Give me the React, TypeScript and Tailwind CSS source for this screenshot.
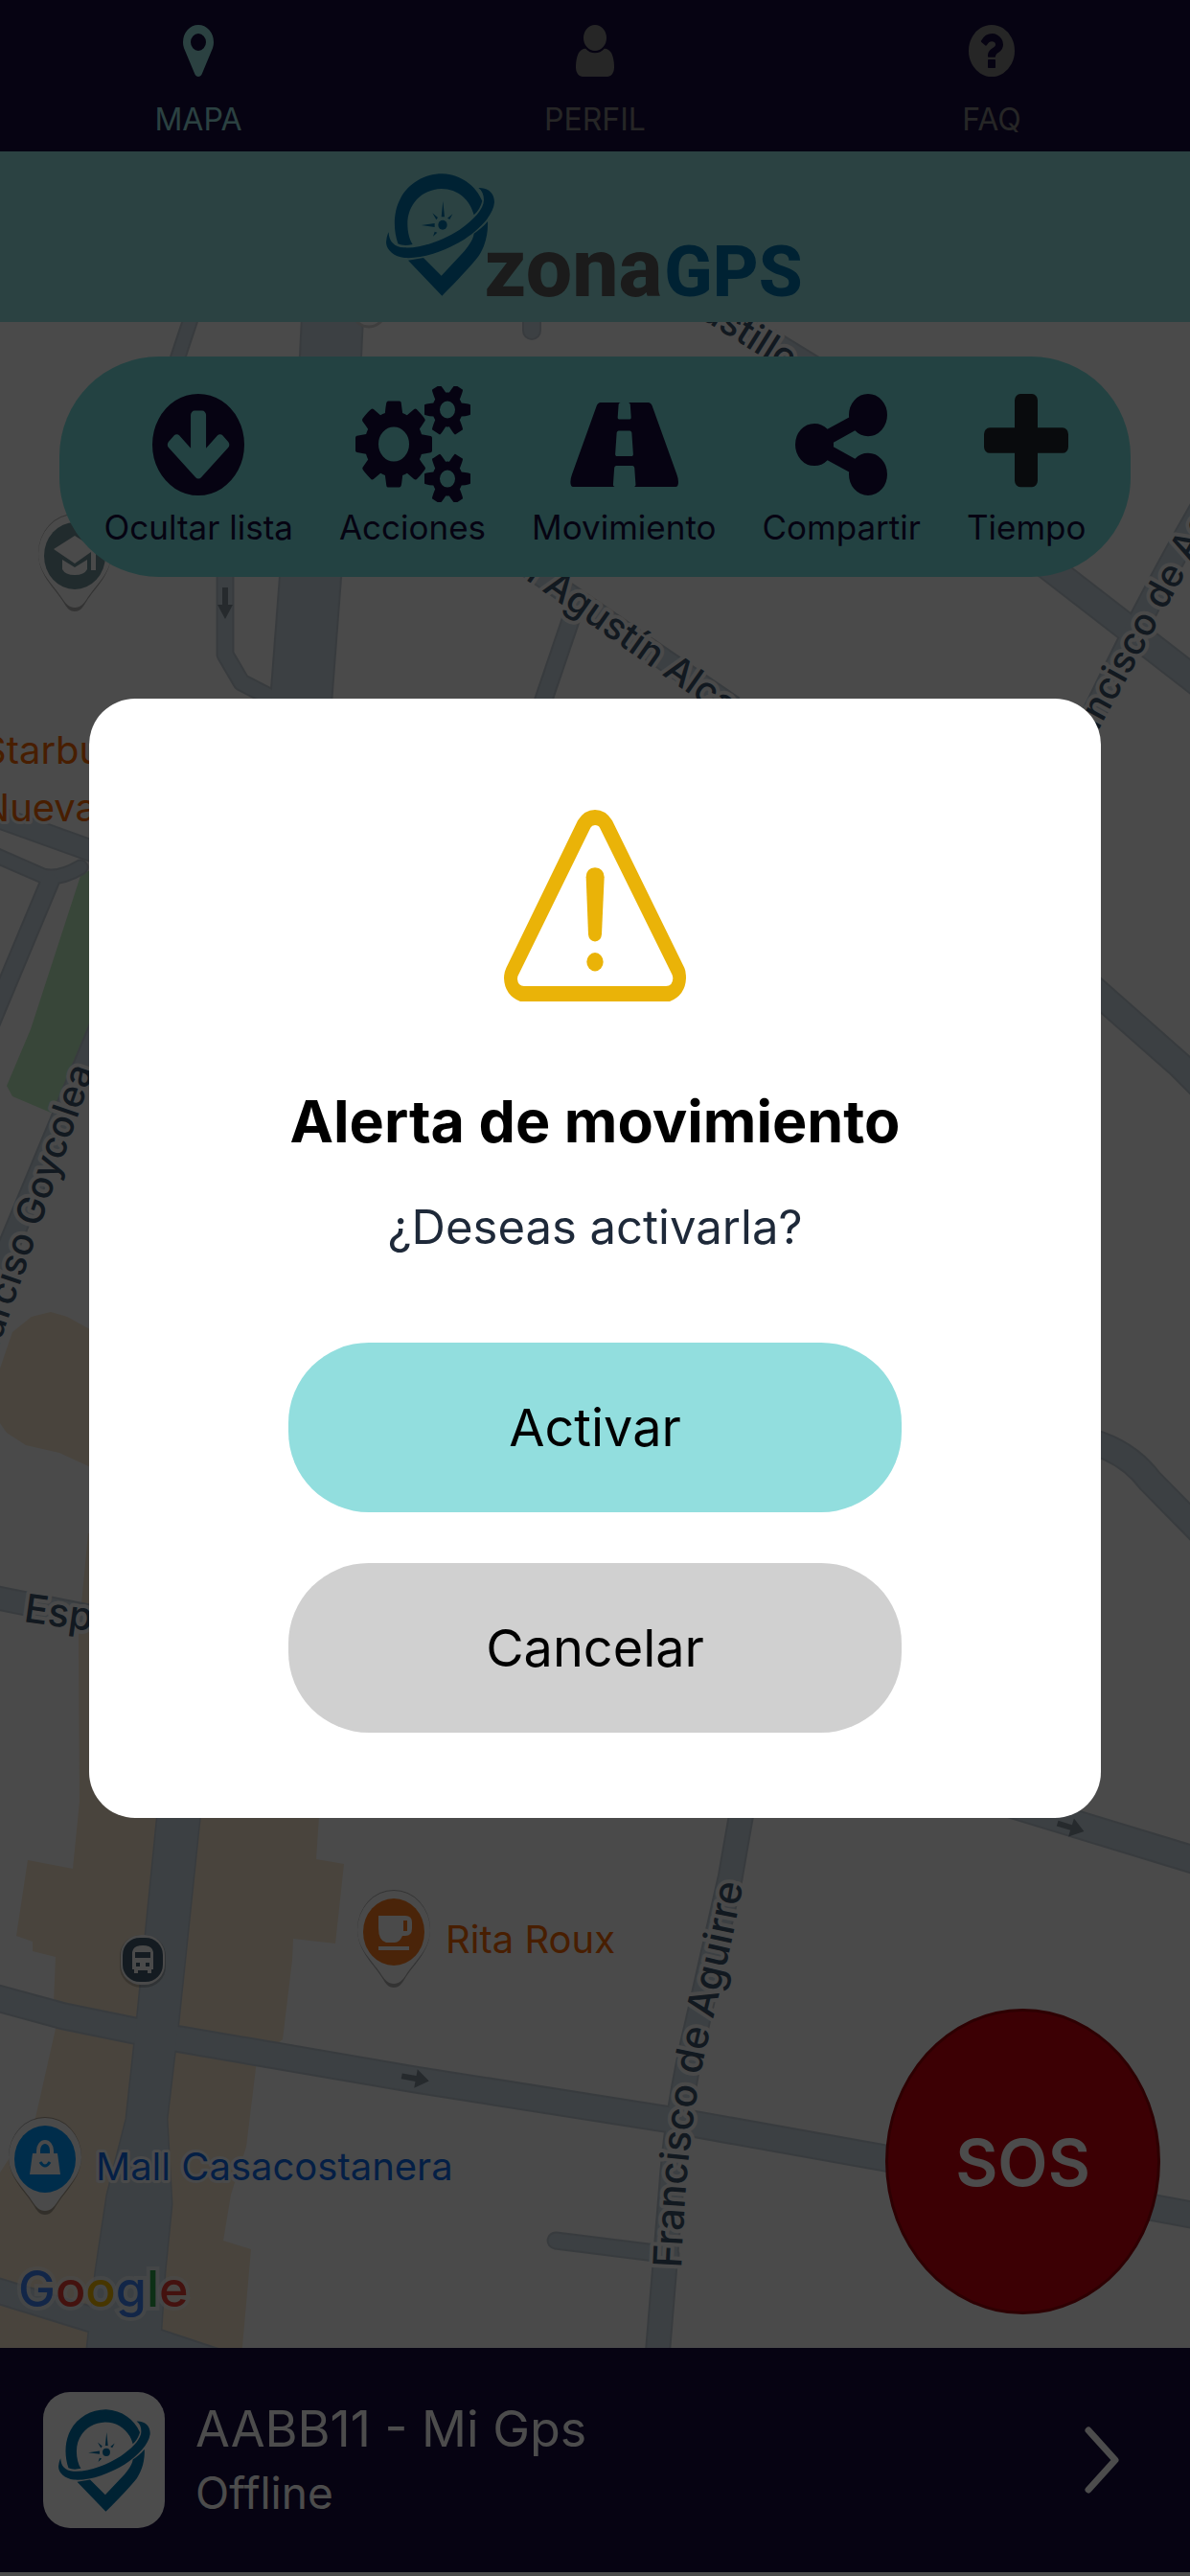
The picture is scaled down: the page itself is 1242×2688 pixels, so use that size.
import { useState } from 'react'

const ICONS = {
    pin: 'M768 640q0-106-75-181t-181-75-181 75-75 181 75 181 181 75 181-75 75-181zm256 0q0 109-33 179l-364 774q-16 33-47.5 52t-67.5 19-67.5-19-46.5-52l-365-774q-33-70-33-179 0-212 150-362t362-150 362 150 150 362z',
    user: 'M1536 1399q0 109-62.5 187t-150.5 78h-854q-88 0-150.5-78t-62.5-187q0-85 8.5-160.5t31.5-152 58.5-131 94-89 134.5-34.5q131 128 313 128t313-128q76 0 134.5 34.5t94 89 58.5 131 31.5 152 8.5 160.5zm-256-887q0 159-112.5 271.5t-271.5 112.5-271.5-112.5-112.5-271.5 112.5-271.5 271.5-112.5 271.5 112.5 112.5 271.5z',
    help: 'M1024 1376v-192q0-14-9-23t-23-9h-192q-14 0-23 9t-9 23v192q0 14 9 23t23 9h192q14 0 23-9t9-23zm256-672q0-88-55.5-163t-138.5-116-170-41q-243 0-371 213-15 24 8 42l132 100q7 6 19 6 16 0 25-12 53-68 86-92 34-24 86-24 48 0 85.5 26t37.5 59q0 38-20 61t-68 45q-63 28-115.5 86.5t-52.5 125.5v36q0 14 9 23t23 9h192q14 0 23-9t9-23q0-19 21.5-49.5t54.5-49.5q32-18 49-28.5t46-35 44.5-48 28-60.5 12.5-81zm384 192q0 209-103 385.5t-279.5 279.5-385.5 103-385.5-103-279.5-279.5-103-385.5 103-385.5 279.5-279.5 385.5-103 385.5 103 279.5 279.5 103 385.5z',
    arrowDown: 'M1413 896q0-27-18-45l-91-91q-18-18-45-18t-45 18l-189 189v-502q0-26-19-45t-45-19h-128q-26 0-45 19t-19 45v502l-189-189q-19-19-45-19t-45 19l-91 91q-18 18-18 45t18 45l362 362 91 91q18 18 45 18t45-18l91-91 362-362q18-18 18-45zm251 0q0 209-103 385.5t-279.5 279.5-385.5 103-385.5-103-279.5-279.5-103-385.5 103-385.5 279.5-279.5 385.5-103 385.5 103 279.5 279.5 103 385.5z',
    cogs: 'M896 896q0-106-75-181t-181-75-181 75-75 181 75 181 181 75 181-75 75-181zm768 512q0-52-38-90t-90-38-90 38-38 90q0 53 37.5 90.5t90.5 37.5 90.5-37.5 37.5-90.5zm0-1024q0-52-38-90t-90-38-90 38-38 90q0 53 37.5 90.5t90.5 37.5 90.5-37.5 37.5-90.5zm-384 421v185q0 10-7 19.5t-16 10.5l-155 24q-11 35-32 76 34 48 90 115 7 11 7 20 0 12-7 19-23 30-82.5 89.5t-78.5 59.5q-11 0-21-7l-115-90q-37 19-77 31-11 108-23 155-7 24-30 24h-186q-11 0-20-7.5t-10-17.5l-23-153q-34-10-75-31l-118 89q-7 7-20 7-11 0-21-8-144-133-144-160 0-9 7-19 10-14 41-53t47-61q-23-44-35-82l-152-24q-10-1-17-9.5t-7-19.5v-185q0-10 7-19.5t16-10.5l155-24q11-35 32-76-34-48-90-115-7-11-7-20 0-12 7-20 22-30 82-89t79-59q11 0 21 7l115 90q34-18 77-32 11-108 23-154 7-24 30-24h186q11 0 20 7.5t10 17.5l23 153q34 10 75 31l118-89q8-7 20-7 11 0 21 8 144 133 144 160 0 8-7 19-12 16-42 54t-45 60q23 48 34 82l152 23q10 2 17 10.5t7 19.5zm640 533v140q0 16-149 31-12 27-30 52 51 113 51 138 0 4-4 7-122 71-124 71-8 0-46-47t-52-68q-20 2-30 2t-30-2q-14 21-52 68t-46 47q-2 0-124-71-4-3-4-7 0-25 51-138-18-25-30-52-149-15-149-31v-140q0-16 149-31 13-29 30-52-51-113-51-138 0-4 4-7 4-2 35-20t59-34 30-16q8 0 46 46.5t52 67.5q20-2 30-2t30 2q51-71 92-112l6-2q4 0 124 70 4 3 4 7 0 25-51 138 17 23 30 52 149 15 149 31zm0-1024v140q0 16-149 31-12 27-30 52 51 113 51 138 0 4-4 7-122 71-124 71-8 0-46-47t-52-68q-20 2-30 2t-30-2q-14 21-52 68t-46 47q-2 0-124-71-4-3-4-7 0-25 51-138-18-25-30-52-149-15-149-31v-140q0-16 149-31 13-29 30-52-51-113-51-138 0-4 4-7 4-2 35-20t59-34 30-16q8 0 46 46.5t52 67.5q20-2 30-2t30 2q51-71 92-112l6-2q4 0 124 70 4 3 4 7 0 25-51 138 17 23 30 52 149 15 149 31z',
    road: 'M1111 1048v-4l-24-320q-1-13-11-22.5t-23-9.5h-186q-13 0-23 9.5t-11 22.5l-24 320v4q-1 12 8 20t21 8h244q12 0 21-8t8-20zm762 421q0 73-46 73h-704q13 0 22-9.5t8-22.5l-20-256q-1-13-11-22.5t-23-9.5h-272q-13 0-23 9.5t-11 22.5l-20 256q-1 13 8 22.5t22 9.5h-704q-46 0-46-73 0-54 26-116l417-1044q8-19 26-33t38-14h339q-13 0-23 9.5t-11 22.5l-15 192q-1 14 8 23t22 9h166q13 0 22-9t8-23l-15-192q-1-13-11-22.5t-23-9.5h339q20 0 38 14t26 33l417 1044q26 62 26 116z',
    share: 'M1344 1024q133 0 226.5 93.5t93.5 226.5-93.5 226.5-226.5 93.5-226.5-93.5-93.5-226.5q0-12 2-34l-360-180q-92 86-218 86-133 0-226.5-93.5t-93.5-226.5 93.5-226.5 226.5-93.5q126 0 218 86l360-180q-2-22-2-34 0-133 93.5-226.5t226.5-93.5 226.5 93.5 93.5 226.5-93.5 226.5-226.5 93.5q-126 0-218-86l-360 180q2 22 2 34t-2 34l360 180q92-86 218-86z',
    plus: 'M1600 736v192q0 40-28 68t-68 28h-416v416q0 40-28 68t-68 28h-192q-40 0-68-28t-28-68v-416h-416q-40 0-68-28t-28-68v-192q0-40 28-68t68-28h416v-416q0-40 28-68t68-28h192q40 0 68 28t28 68v416h416q40 0 68 28t28 68z',
}

function Icon({ d, viewBox, className }: { d: string; viewBox: string; className: string }) {
    return (
        <svg viewBox={viewBox} preserveAspectRatio="none" className={className} fill="currentColor" aria-hidden="true">
            <path d={d} />
        </svg>
    )
}

const tabs = [
    { label: 'MAPA', d: ICONS.pin, viewBox: '0 128 1024 1536', size: 'w-8 h-[54px]', color: 'text-[#8fdada]' },
    { label: 'PERFIL', d: ICONS.user, viewBox: '256 128 1280 1536', size: 'w-10 h-[54px]', color: 'text-[#808080]' },
    { label: 'FAQ', d: ICONS.help, viewBox: '128 128 1536 1536', size: 'w-12 h-[54px]', color: 'text-[#808080]' },
]

const actions = [
    { label: 'Ocultar lista', d: ICONS.arrowDown, viewBox: '128 128 1536 1536', size: 'w-24 h-[106px]', color: '' },
    { label: 'Acciones', d: ICONS.cogs, viewBox: '0 36 1920 1720', size: 'w-[120px] h-[121px]', color: '' },
    { label: 'Movimiento', d: ICONS.road, viewBox: '47 262 1826 1280', size: 'w-[113px] h-[88px]', color: '' },
    { label: 'Compartir', d: ICONS.share, viewBox: '128 128 1536 1536', size: 'w-24 h-[106px]', color: '' },
    { label: 'Tiempo', d: ICONS.plus, viewBox: '192 128 1408 1536', size: 'w-[88px] h-[106px]', color: 'text-[#1e252d]' },
]

function BrandMark() {
    return (
        <g fill="#0074ab">
            <path d="M92 282C76 235 78 180 100 140C125 92 178 62 232 63C290 66 335 100 356 148C352 165 343 180 330 192C318 145 280 110 228 110C165 112 122 160 122 220C122 245 128 268 138 284C120 288 105 288 92 282Z" />
            <path d="M344 107C375 106 394 125 394 152C392 190 350 235 300 268C240 305 170 330 112 326C75 322 50 295 56 270C57 260 60 252 63 246C64 275 80 292 110 294C165 298 235 270 285 238C330 205 360 175 361 145C361 128 355 115 344 107Z" />
            <path d="M124 334L172 326L228 382L300 305C320 280 328 265 330 250C345 240 360 228 373 212C375 250 365 290 345 320C320 352 280 395 230 445Z" />
            <ellipse cx="232" cy="223" rx="14" ry="15" />
            <path d="M233 148L238 198H228ZM165 224L207 218V230ZM200 186L217 200L212 207ZM263 189L254 206L247 202ZM202 259L207 244L215 247Z" />
        </g>
    )
}

function Logo() {
    return (
        <svg viewBox="55 62 1310 390" className="h-[130px]" role="img" aria-label="zonaGPS">
            <BrandMark />
            <g fontFamily="Roboto, sans-serif" fontWeight="800">
                <text x="362" y="445" fontSize="258" fill="#5d5d5d">zona</text>
                <text x="926" y="445" fontSize="222" fill="#0074ab">GPS</text>
            </g>
        </svg>
    )
}

function Pin({ x, y, color, children }: { x: number; y: number; color: string; children: React.ReactNode }) {
    return (
        <g transform={`translate(${x} ${y})`}>
            <path d="M0 58C-6 58 -9 53 -12 48C-22 32 -38 20 -38 -3A38 41 0 0 1 38 -3C38 20 22 32 12 48C9 53 6 58 0 58Z" fill="#000" opacity=".3" />
            <path d="M0 54C-6 54 -9 50 -12 46C-22 30 -38 18 -38 -2A38 41 0 0 1 38 -2C38 18 22 30 12 46C9 50 6 54 0 54Z" fill="#f7f7f7" />
            <ellipse rx="32" ry="35" fill={color} />
            {children}
        </g>
    )
}

// thin edge drawn first, fill on top
const roads = [
    { d: 'M200 330L170 420', w: 15 },
    { d: 'M235 590V683L252 712L310 742', w: 17 },
    { d: 'M347 330L345 372L324 602L312 760', w: 64 },
    { d: 'M555 320V345', w: 18 },
    { d: 'M700 290L870 394', w: 20 },
    { d: 'M520 570L810 768', w: 22 },
    { d: 'M598 640L564 740', w: 18 },
    { d: 'M1090 588L1250 712', w: 28 },
    { d: 'M1120 790Q1190 640 1260 520', w: 24 },
    { d: 'M1130 1022L1232 1112L1260 1140', w: 27 },
    { d: 'M1130 1502Q1175 1512 1200 1545L1260 1606', w: 26 },
    { d: 'M-10 850L110 893', w: 22 },
    { d: 'M-10 890L45 914Q62 918 84 905', w: 15 },
    { d: 'M52 920L-20 1092', w: 19 },
    { d: 'M110 1058L-20 1370', w: 22 },
    { d: 'M-10 1666L110 1690', w: 24 },
    { d: 'M1030 1875L1260 1945', w: 28 },
    { d: 'M580 2338L700 2353', w: 17 },
    { d: 'M776 1880L762 1960L728 2110Q706 2200 700 2290L686 2460', w: 25 },
    { d: 'M-10 2083L67 2104L165 2124L433 2170L700 2212L924 2252L1260 2314', w: 27 },
    { d: 'M-10 2388L94 2420L250 2472', w: 26 },
]

function MapView() {
    return (
        <svg viewBox="0 336 1242 2114" preserveAspectRatio="xMidYMid slice" className="absolute inset-0 size-full bg-[#f7f7f7]" fontFamily="Inter, sans-serif">
            <g fill="#f3e3cb">
                <path d="M0 1428L13 1390L33 1374L53 1369L70 1374L110 1396V1538L62 1516L27 1508L7 1495L0 1485Z" />
                <path d="M92 1600L82 1705L83 1880L76 1950L29 1941L17 2020L34 2026V2036L58 2042L56 2090L58 2117L37 2210L0 2267V2460H252L262 2347L233 2338L241 2290L257 2240L268 2150L295 2128L305 2045L306 2023L350 2028L359 1945L330 1940L334 1880L340 1600Z" />
            </g>
            <path d="M85 911L110 904V1050L60 1161H53L13 1144L7 1133L32 1074Z" fill="#bbe9be" />

            <g fill="none" strokeLinecap="round" strokeLinejoin="round">
                {roads.map(r => <path key={r.d} d={r.d} stroke="#bbc7d0" strokeWidth={r.w + 2} />)}
                <path d="M166 1880L143 2110L132 2211L112 2290L100 2370L90 2460H166L172 2370L179 2300L174 2211L186 2110L210 1880Z" stroke="#bbc7d0" strokeWidth="3" />
                {roads.map(r => <path key={r.d} d={r.d} stroke="#c8d5df" strokeWidth={r.w - 2} />)}
            </g>
            <path d="M166 1880L143 2110L132 2211L112 2290L100 2370L90 2460H166L172 2370L179 2300L174 2211L186 2110L210 1880Z" fill="#c8d5df" />

            <g fill="#7f8d97">
                <path d="M-15 -3H0V-10L14 0L0 10V3H-15Z" transform="translate(434 2169) rotate(10)" />
                <path d="M-15 -3H0V-10L14 0L0 10V3H-15Z" transform="translate(1118 1907) rotate(17)" />
                <path d="M-18 -3H0V-8L15 0L0 8V3H-18Z" transform="translate(235 631) rotate(90)" />
            </g>

            <defs>
                <path id="aguirre" d="M711 2367C714 2300 718 2240 729 2176S760 2060 782 1930" />
            </defs>
            <g fill="#3c546b" stroke="#f7f7f7" strokeWidth="8" strokeLinejoin="round" paintOrder="stroke" fontSize="39" fontWeight="500">
                <text transform="translate(822 389) rotate(32)" textAnchor="end">Castillo</text>
                <text transform="translate(565 616) rotate(35)">Agustín Alcalde</text>
                <text transform="translate(556 610) rotate(35)" textAnchor="end">San</text>
                <text transform="translate(1122 806) rotate(-61)">Francisco de Aguirre</text>
                <text fontSize="41"><textPath href="#aguirre">Francisco de Aguirre</textPath></text>
                <text transform="translate(98 1116) rotate(-71)" textAnchor="end">Narciso Goycolea</text>
                <text transform="translate(24 1692) rotate(8)" fontSize="41">Espoz</text>
            </g>
            <g stroke="#f7f7f7" strokeWidth="6" strokeLinejoin="round" paintOrder="stroke" fontSize="40">
                <g fill="#f06400">
                    <text x="-19" y="797">Starbucks</text>
                    <text x="-20" y="857">Nueva</text>
                    <text x="465" y="2038">Rita Roux</text>
                </g>
                <text x="100" y="2275" fill="#1068e8">Mall Casacostanera</text>
            </g>
            <text x="19" y="2407" fontSize="52" fontWeight="500" stroke="#f7f7f7" strokeWidth="8" strokeOpacity=".6" paintOrder="stroke">
                <tspan fill="#3f80f0">G</tspan>
                <tspan fill="#e33d32">o</tspan>
                <tspan fill="#efb400">o</tspan>
                <tspan fill="#3f80f0">g</tspan>
                <tspan fill="#2ca04c">l</tspan>
                <tspan fill="#e33d32">e</tspan>
            </text>

            <circle cx="385" cy="324" r="17" fill="#f7f7f7" stroke="#cfcfcf" strokeWidth="3" />
            <Pin x={78} y={580} color="#718f96">
                <path d="M-22 -7L0 -21L22 -7V15H17V-4L0 8ZM-13 4L0 12L13 4V14Q10 20 0 20T-13 14Z" fill="#f7f7f7" />
            </Pin>
            <Pin x={411} y={2016} color="#f77b21">
                <path d="M-16 -17H12Q19 -17 19 -10V-4Q19 4 12 4H9Q6 11 1 11H-8Q-16 9 -16 -4ZM10 -12V-1H14V-12ZM-16 15H16V19H-16Z" fill="#f7f7f7" fillRule="evenodd" />
            </Pin>
            <Pin x={47} y={2253} color="#0096fa">
                <path d="M-13 -6H13L16 16H-16Z" fill="#f7f7f7" />
                <path d="M-7 -5V-9A7 9 0 0 1 7 -9V-5" fill="none" stroke="#f7f7f7" strokeWidth="4" />
                <path d="M-5 3Q0 11 5 3" fill="none" stroke="#0096fa" strokeWidth="3" />
            </Pin>
            <g transform="translate(149 2045)">
                <rect x="-24" y="-26" width="48" height="55" rx="22" fill="#000" opacity=".2" />
                <rect x="-23" y="-26" width="46" height="52" rx="21" fill="#f7f7f7" />
                <rect x="-21" y="-23" width="42" height="46" rx="18" fill="#435d71" />
                <path d="M-11 -8Q-10 -15 0 -15T11 -8V10H9V14H5V11H-5V14H-9V10H-11ZM-8 -8V-2H8V-8ZM-7 3V7H-3V3ZM3 3V7H7V3Z" fill="#f7f7f7" fillRule="evenodd" />
            </g>
        </svg>
    )
}

export default function App() {
    const [isAlertOpen, setIsAlertOpen] = useState(true)

    return (
        <div className="flex flex-col min-h-screen bg-white font-['Inter',sans-serif]">
            <nav className="grid grid-cols-3 h-[158px] bg-[#140d3c]">
                {tabs.map(tab => (
                    <a key={tab.label} href="#" className={`flex flex-col items-center pt-[26px] gap-[25px] ${tab.color}`}>
                        <Icon d={tab.d} viewBox={tab.viewBox} className={tab.size} />
                        <span className="text-[32px] leading-10">{tab.label}</span>
                    </a>
                ))}
            </nav>

            <header className="flex justify-center h-[178px] pt-[23px] bg-[#92dede]">
                <Logo />
            </header>

            <main className="flex-1 relative overflow-hidden">
                <MapView />
                <div className="relative w-[90%] mx-auto mt-9 pt-[31px] pb-7 flex justify-center gap-12 rounded-[104px] bg-[#75dedc] text-[#140d3c]">
                    {actions.map(action => (
                        <button key={action.label} type="button" className="flex flex-col items-center gap-0.5">
                            <span className="flex items-center h-[121px]">
                                <Icon d={action.d} viewBox={action.viewBox} className={`${action.size} ${action.color}`} />
                            </span>
                            <span className="text-[35px] leading-12 whitespace-nowrap">{action.label}</span>
                        </button>
                    ))}
                </div>
                <button type="button" className="absolute right-[31px] bottom-[35px] w-[287px] h-[319px] rounded-[50%] border-3 border-[#960009] bg-[#c8000f] text-white text-[68px] font-semibold">
                    SOS
                </button>
            </main>

            <a href="#" className="flex items-center h-[234px] mb-1 pl-[45px] pr-[74px] gap-8 bg-[#140d3c] text-white">
                <span className="flex items-center justify-center w-[127px] h-[142px] rounded-[28px] bg-white">
                    <svg viewBox="55 62 340 384" preserveAspectRatio="none" className="w-24 h-[107px]" aria-hidden="true">
                        <BrandMark />
                    </svg>
                </span>
                <span className="flex-1 flex flex-col">
                    <span className="text-[52px] leading-[68px]">AABB11 - Mi Gps</span>
                    <span className="text-[46px] leading-[64px]">Offline</span>
                </span>
                <svg viewBox="0 0 36 70" className="w-9 h-[70px]" fill="none" stroke="currentColor" strokeWidth="7" strokeLinecap="round" strokeLinejoin="round" aria-hidden="true">
                    <path d="M4 4L32 35L4 66" />
                </svg>
            </a>

            {isAlertOpen && (
                <div className="fixed inset-0 flex items-center justify-center pb-[62px] bg-black/70">
                    <div role="alertdialog" aria-labelledby="alert-title" className="w-[85%] px-52 pt-[116px] pb-[89px] flex flex-col items-center rounded-[48px] bg-white">
                        <svg viewBox="199 134 570 601" preserveAspectRatio="none" className="w-[190px] h-[200px]" fill="#eab308" aria-hidden="true">
                            <path fillRule="evenodd" d="M430 168Q450 134 484 134Q518 134 538 168L764 630Q769 640 769 662Q767 715 718 735H250Q201 715 199 662Q199 645 206 630ZM470 190L245 650Q241 655 241 665Q243 687 262 687H706Q727 687 728 662Q728 655 724 648L499 190Q495 182 484 182Q474 182 470 190Z" />
                            <path d="M456 345Q457 316 484 315Q511 316 513 345L505 525Q503 547 484 547Q465 547 463 525Z" />
                            <ellipse cx="484" cy="611" rx="26" ry="29" />
                        </svg>
                        <h2 id="alert-title" className="mt-[85px] text-[61px] leading-20 font-bold text-black whitespace-nowrap">Alerta de movimiento</h2>
                        <p className="mt-[39px] text-[49px] leading-16 text-gray-800">¿Deseas activarla?</p>
                        <button type="button" onClick={() => setIsAlertOpen(false)} className="mt-[88px] w-full h-[177px] rounded-[84px] bg-[#92dede] text-[54px] text-black">
                            Activar
                        </button>
                        <button type="button" onClick={() => setIsAlertOpen(false)} className="mt-[53px] w-full h-[177px] rounded-[84px] bg-[#d0d0d0] text-[54px] text-black">
                            Cancelar
                        </button>
                    </div>
                </div>
            )}
        </div>
    )
}
